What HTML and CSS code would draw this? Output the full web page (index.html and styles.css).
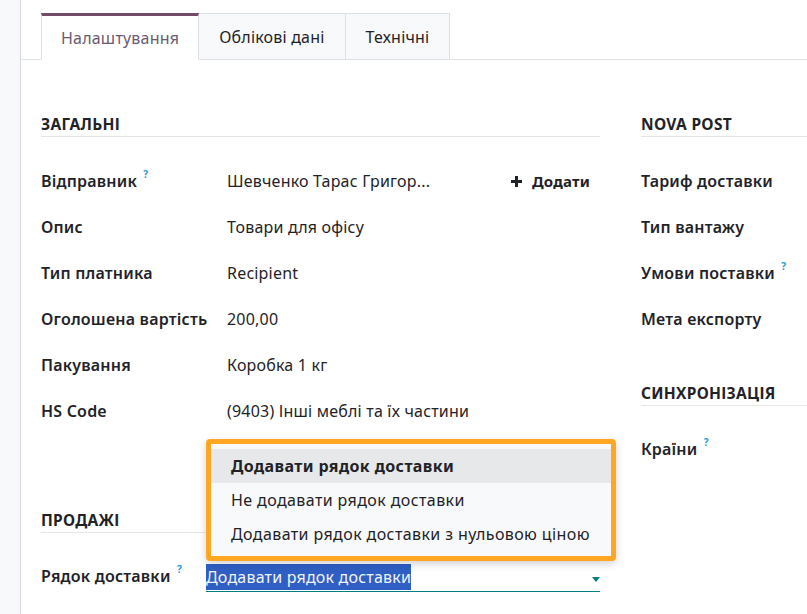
FILE: index.html
```html
<!DOCTYPE html>
<html lang="uk">
<head>
    <meta charset="UTF-8">
    <meta name="viewport" content="width=device-width, initial-scale=1.0">
    <title>Налаштування</title>
    <link rel="stylesheet" href="styles.css">
</head>
<body>
    <div class="page">
        <div class="side"></div>
        <div class="sheet">
            <ul class="tabs">
                <li class="tab active">Налаштування</li>
                <li class="tab">Облікові дані</li>
                <li class="tab">Технічні</li>
            </ul>

            <div class="columns">
                <div class="col">
                    <div class="group">
                        <div class="group-title">Загальні</div>
                        <div class="row">
                            <div class="label">Відправник <sup class="help">?</sup></div>
                            <div class="value with-action">
                                <span>Шевченко Тарас Григор...</span>
                                <span class="add-btn">
                                    <svg class="plus" width="11" height="11" viewBox="0 0 11 11"><path d="M4 0h3v4h4v3H7v4H4V7H0V4h4z" fill="#1f2328"/></svg>
                                    Додати
                                </span>
                            </div>
                        </div>
                        <div class="row">
                            <div class="label">Опис</div>
                            <div class="value">Товари для офісу</div>
                        </div>
                        <div class="row">
                            <div class="label">Тип платника</div>
                            <div class="value">Recipient</div>
                        </div>
                        <div class="row">
                            <div class="label">Оголошена вартість</div>
                            <div class="value">200,00</div>
                        </div>
                        <div class="row">
                            <div class="label">Пакування</div>
                            <div class="value">Коробка 1 кг</div>
                        </div>
                        <div class="row">
                            <div class="label">HS Code</div>
                            <div class="value">(9403) Інші меблі та їх частини</div>
                        </div>
                    </div>

                    <div class="group group-sales">
                        <div class="group-title">Продажі</div>
                        <div class="row">
                            <div class="label">Рядок доставки <sup class="help">?</sup></div>
                            <div class="value select">
                                <span class="selected-text">Додавати рядок доставки</span>
                                <span class="caret"></span>
                                <ul class="dropdown">
                                    <li class="option current">Додавати рядок доставки</li>
                                    <li class="option">Не додавати рядок доставки</li>
                                    <li class="option">Додавати рядок доставки з нульовою ціною</li>
                                </ul>
                            </div>
                        </div>
                    </div>
                </div>

                <div class="col">
                    <div class="group">
                        <div class="group-title">Nova Post</div>
                        <div class="row">
                            <div class="label">Тариф доставки</div>
                            <div class="value"></div>
                        </div>
                        <div class="row">
                            <div class="label">Тип вантажу</div>
                            <div class="value"></div>
                        </div>
                        <div class="row">
                            <div class="label">Умови поставки <sup class="help">?</sup></div>
                            <div class="value"></div>
                        </div>
                        <div class="row">
                            <div class="label">Мета експорту</div>
                            <div class="value"></div>
                        </div>
                    </div>

                    <div class="group group-sync">
                        <div class="group-title">Синхронізація</div>
                        <div class="row">
                            <div class="label">Країни <sup class="help">?</sup></div>
                            <div class="value"></div>
                        </div>
                    </div>
                </div>
            </div>
        </div>
    </div>
</body>
</html>
```

FILE: styles.css
```css
html, body {
    margin: 0;
    padding: 0;
    height: 100%;
    overflow: hidden;
}
body {
    font-family: "Noto Sans", "Open Sans", sans-serif;
    font-size: 16px;
    letter-spacing: 0.2px;
    color: #1f2328;
    background: #fff;
}
.page {
    display: flex;
    height: 100%;
}
.side {
    width: 20px;
    flex: none;
    background: #f8f9fa;
    border-right: 1px solid #d8dadd;
}
.sheet {
    flex: 1;
    padding-top: 13px;
    min-width: 0;
}
.tabs {
    list-style: none;
    margin: 0;
    padding: 0 0 0 20px;
    display: flex;
    border-bottom: 1px solid #dee2e6;
    height: 46px;
}
.tab {
    padding: 0 20px;
    display: flex;
    align-items: center;
    background: #f8f9fa;
    border: 1px solid #dee2e6;
    border-left: none;
    margin-bottom: -1px;
    color: #1f2328;
}
.tab.active {
    background: #fff;
    border-left: 1px solid #dee2e6;
    border-top: 3px solid #714b67;
    border-bottom: 1px solid #fff;
    color: #6b5a72;
    padding: 0 19px;
}
.columns {
    display: grid;
    grid-template-columns: 559px 559px;
    column-gap: 41px;
    padding: 54px 0 0 20px;
}
.group-title {
    font-weight: 700;
    text-transform: uppercase;
    font-size: 15.5px;
    letter-spacing: 0.3px;
    line-height: 20px;
    padding-bottom: 2px;
    border-bottom: 1px solid #e3e5e8;
    margin-bottom: 21px;
}
.group-sales {
    margin-top: 76px;
}
.group-sync {
    margin-top: 41px;
}
.group-sync .group-title,
.group-sales .group-title {
    margin-bottom: 20px;
}
.row {
    display: grid;
    grid-template-columns: 186px 1fr;
    height: 46px;
    align-items: center;
}
.label {
    font-weight: 600;
}
.help {
    color: #1a9bd7;
    font-size: 10px;
    font-weight: 700;
    vertical-align: top;
    position: relative;
    top: -3px;
    margin-left: 2px;
}
.with-action {
    display: flex;
    justify-content: space-between;
    padding-right: 10px;
}
.add-btn {
    font-weight: 700;
    font-size: 15px;
    display: flex;
    align-items: center;
}
.plus {
    margin-right: 10px;
}
.select {
    position: relative;
    margin-left: -21px;
    height: 28px;
    display: flex;
    align-items: center;
    border-bottom: 1px solid #017e84;
    margin-top: 2px;
}
.selected-text {
    background: #2f5fc4;
    color: #f2f4f8;
    line-height: 26px;
}
.caret {
    position: absolute;
    right: 0;
    top: 14px;
    border-left: 4px solid transparent;
    border-right: 4px solid transparent;
    border-top: 5px solid #017e84;
}
.dropdown {
    position: absolute;
    left: 0;
    bottom: 30px;
    width: 400px;
    margin: 0;
    padding: 5px 0 5px;
    list-style: none;
    background: #f8f9fa;
    border: 5px solid #ffa724;
    border-radius: 4px;
    box-shadow: 0 3px 8px rgba(0, 0, 0, 0.18);
}
.option {
    height: 34px;
    line-height: 34px;
    padding-left: 20px;
    letter-spacing: 0.4px;
    color: #1f2328;
}
.option.current {
    background: #e7e8ea;
    font-weight: 700;
}
```
